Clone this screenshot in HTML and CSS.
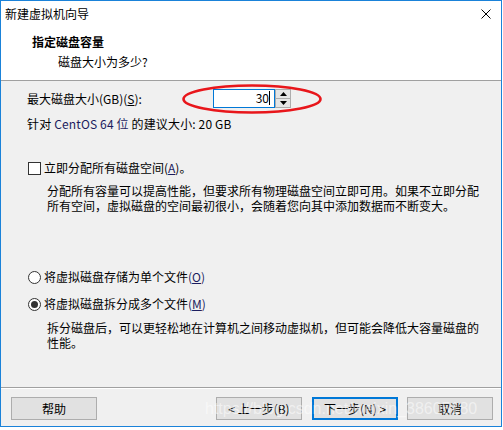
FILE: index.html
```html
<!DOCTYPE html>
<html lang="zh-CN">
<head>
<meta charset="utf-8">
<title>新建虚拟机向导</title>
<link rel="stylesheet" href="styles.css">
</head>
<body>
<div class="window">
  <div class="titlebar">
    <span class="title">新建虚拟机向导</span>
    <svg class="close" width="10" height="10" viewBox="0 0 10 10"><path d="M0.5 0.5 L9.5 9.5 M9.5 0.5 L0.5 9.5" stroke="#000" stroke-width="1" fill="none"/></svg>
  </div>
  <div class="header">
    <div class="h-title">指定磁盘容量</div>
    <div class="h-sub">磁盘大小为多少?</div>
  </div>
  <div class="content">
    <div class="size-row">
      <span class="label">最大磁盘大小(GB)(<u>S</u>):</span>
      <div class="spin">
        <div class="spin-input">30<span class="caret"></span></div>
        <div class="spin-btns">
          <div class="spin-btn"><svg width="7" height="4" viewBox="0 0 7 4"><path d="M3.5 0 L7 4 L0 4 Z" fill="#000"/></svg></div>
          <div class="spin-btn"><svg width="7" height="4" viewBox="0 0 7 4"><path d="M0 0 L7 0 L3.5 4 Z" fill="#000"/></svg></div>
        </div>
      </div>
    </div>
    <div class="recommend">针对 <span class="navy">CentOS 64 位</span> 的建议大小: 20 GB</div>
    <div class="check-row"><span class="checkbox"></span><span>立即分配所有磁盘空间(<u class="navy">A</u>)。</span></div>
    <p class="desc">分配所有容量可以提高性能，但要求所有物理磁盘空间立即可用。如果不立即分配所有空间，虚拟磁盘的空间最初很小，会随着您向其中添加数据而不断变大。</p>
    <div class="radio-row r1"><span class="radio"></span><span>将虚拟磁盘存储为单个文件<span class="navy">(<u>O</u>)</span></span></div>
    <div class="radio-row r2"><span class="radio checked"></span><span>将虚拟磁盘拆分成多个文件<span class="navy">(<u>M</u>)</span></span></div>
    <p class="desc desc2">拆分磁盘后，可以更轻松地在计算机之间移动虚拟机，但可能会降低大容量磁盘的性能。</p>
  </div>
  <div class="footer">
    <button class="btn">帮助</button>
    <div class="spacer"></div>
    <button class="btn">&lt; 上一步(B)</button>
    <button class="btn primary">下一步(N) &gt;</button>
    <button class="btn">取消</button>
  </div>
  <svg class="annot" width="144" height="34" viewBox="0 0 144 34"><ellipse cx="72" cy="17" rx="68.5" ry="13.5" fill="none" stroke="#e8161b" stroke-width="2.6"/></svg>
  <div class="watermark">https://blog.csdn.net/weixin_38605180</div>
</div>
</body>
</html>
```
FILE: styles.css
```css
* { box-sizing: border-box; }
html, body { margin: 0; padding: 0; background: #fff; }
body {
  font-family: "Noto Sans CJK SC", "Noto Sans", sans-serif;
  font-size: 12px;
  color: #000;
  width: 503px;
  height: 430px;
  overflow: hidden;
}
.window {
  position: relative;
  width: 502px;
  height: 427px;
  border: 1px solid #1a82d9;
  display: flex;
  flex-direction: column;
  background: #fff;
  overflow: hidden;
}
.titlebar {
  height: 25px;
  display: flex;
  align-items: center;
  justify-content: space-between;
  padding: 0 10px 0 4px;
  flex: none;
}
.title { font-size: 12px; line-height: 16px; margin-top: 1px; }
.close { display: block; }
.header {
  height: 55px;
  flex: none;
  background: #fff;
  border-bottom: 1px solid #a0a0a0;
  padding: 8px 0 0 31px;
}
.h-title { font-weight: bold; line-height: 16px; }
.h-sub { line-height: 16px; margin-top: 4px; padding-left: 26px; }
.content {
  flex: 1;
  background: #f0f0f0;
  padding: 8px 0 0 26px;
  border-bottom: 1px solid #a0a0a0;
}
.size-row { display: flex; align-items: center; height: 19px; }
.label { line-height: 16px; width: 186px; }
.spin { display: flex; height: 19px; }
.spin-input {
  width: 62px;
  height: 19px;
  background: #fff;
  border: 1px solid #0078d7;
  text-align: right;
  padding-right: 4px;
  line-height: 16px;
}
.caret {
  display: inline-block;
  width: 1px;
  height: 14px;
  background: #000;
  vertical-align: -2px;
}
.spin-btns { display: flex; flex-direction: column; width: 16px; height: 19px; }
.spin-btn {
  flex: 1;
  background: #e5e5e5;
  border: 1px solid #adadad;
  display: flex;
  align-items: center;
  justify-content: center;
}
.spin-btn + .spin-btn { border-top: none; }
.spin-btn svg { display: block; }
.recommend { line-height: 16px; margin-top: 8px; letter-spacing: 0.15px; }
.navy { color: #1c1c5e; }
.check-row { display: flex; align-items: center; margin-top: 28px; line-height: 16px; }
.checkbox {
  width: 13px; height: 13px;
  border: 1px solid #333;
  background: #fff;
  margin: 0 3px 0 1px;
  flex: none;
}
.desc {
  margin: 7px 0 0 20px;
  width: 440px;
  line-height: 15px;
}
.radio-row { display: flex; align-items: center; line-height: 16px; }
.r1 { margin-top: 56px; }
.r2 { margin-top: 11px; }
.radio {
  width: 13px; height: 13px;
  border: 1px solid #333;
  border-radius: 50%;
  background: #fff;
  margin: 0 3px 0 1px;
  flex: none;
  position: relative;
}
.radio.checked::after {
  content: "";
  position: absolute;
  left: 2px; top: 2px;
  width: 7px; height: 7px;
  border-radius: 50%;
  background: #333;
}
.desc2 { margin-top: 8px; }
.footer {
  flex: none;
  height: 38px;
  border-top: 1px solid #fff;
  background: #f0f0f0;
  display: flex;
  align-items: flex-start;
  padding: 8px 8px 0 10px;
  gap: 9px;
}
.spacer { flex: 1; }
.btn {
  width: 86px;
  height: 23px;
  background: #e1e1e1;
  border: 1px solid #adadad;
  font-family: inherit;
  font-size: 12px;
  color: #000;
  padding: 0;
  line-height: 16px;
}
.btn.primary { border: 2px solid #0078d7; margin-left: 1px; }
.annot {
  position: absolute;
  left: 179px;
  top: 81px;
}
.watermark {
  position: absolute;
  left: 204px;
  top: 399px;
  font-family: "Liberation Sans", sans-serif;
  font-size: 16px;
  color: rgba(255,255,255,0.5);
  white-space: nowrap;
  pointer-events: none;
}
```
